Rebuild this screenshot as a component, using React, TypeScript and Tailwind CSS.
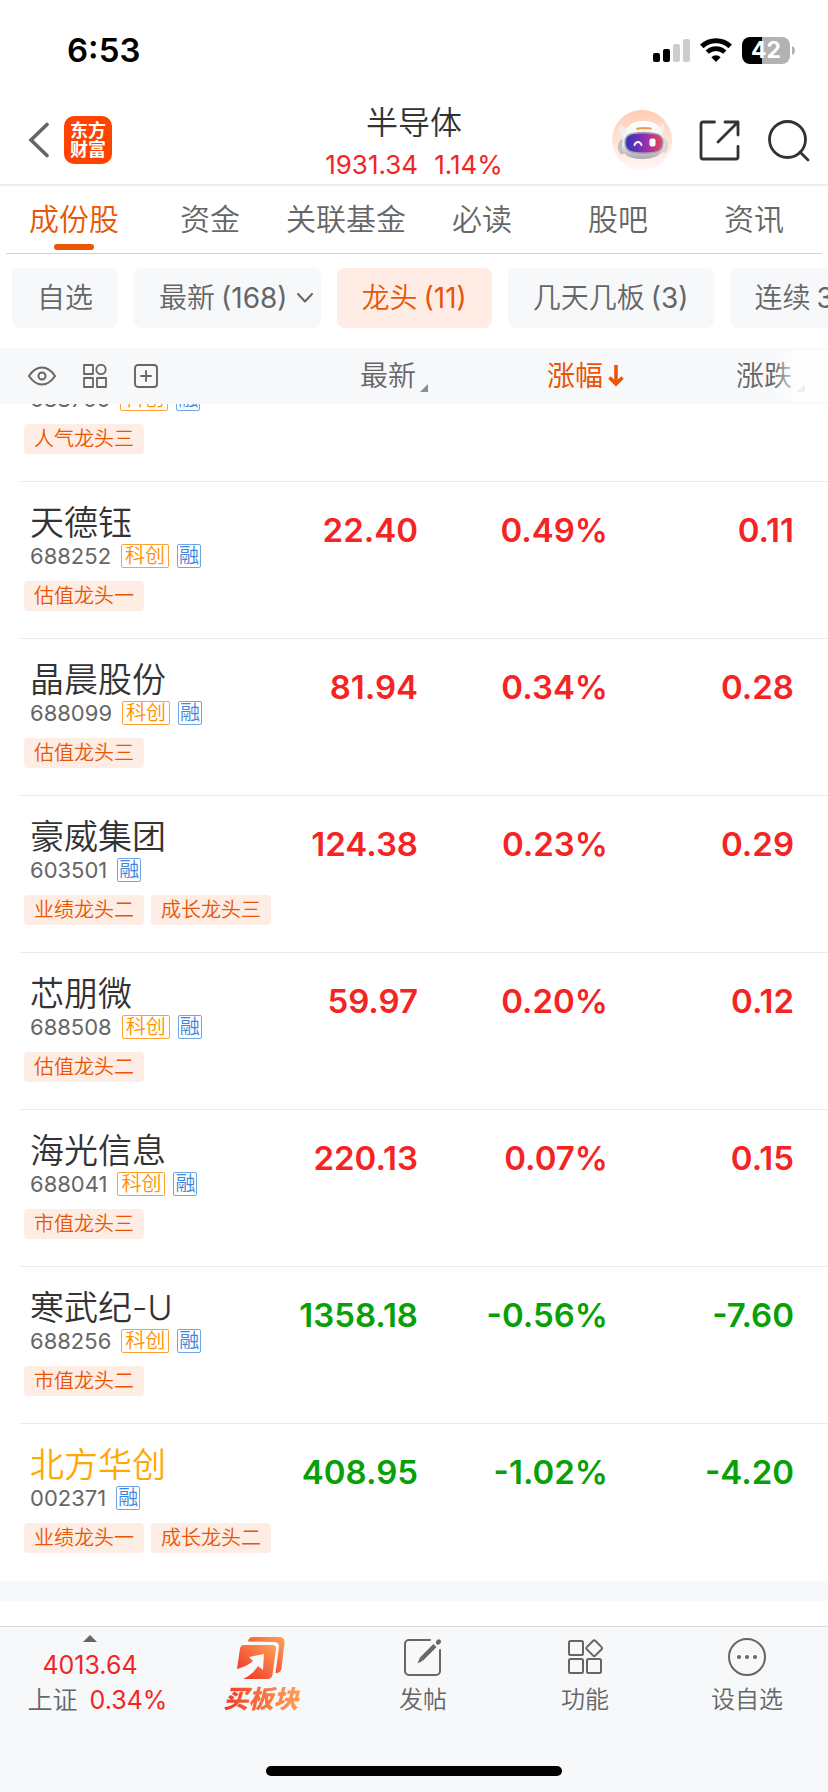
import React from "react";

type Stock = {
  name: string;
  code: string;
  star: boolean;
  tags: string[];
  price: string;
  pct: string;
  diff: string;
  held?: boolean;
};

const stocks: Stock[] = [
  { name: "天德钰", code: "688252", star: true, tags: ["估值龙头一"], price: "22.40", pct: "0.49%", diff: "0.11" },
  { name: "晶晨股份", code: "688099", star: true, tags: ["估值龙头三"], price: "81.94", pct: "0.34%", diff: "0.28" },
  { name: "豪威集团", code: "603501", star: false, tags: ["业绩龙头二", "成长龙头三"], price: "124.38", pct: "0.23%", diff: "0.29" },
  { name: "芯朋微", code: "688508", star: true, tags: ["估值龙头二"], price: "59.97", pct: "0.20%", diff: "0.12" },
  { name: "海光信息", code: "688041", star: true, tags: ["市值龙头三"], price: "220.13", pct: "0.07%", diff: "0.15" },
  { name: "寒武纪-U", code: "688256", star: true, tags: ["市值龙头二"], price: "1358.18", pct: "-0.56%", diff: "-7.60" },
  { name: "北方华创", code: "002371", star: false, tags: ["业绩龙头一", "成长龙头二"], price: "408.95", pct: "-1.02%", diff: "-4.20", held: true },
];

const tabs = ["成份股", "资金", "关联基金", "必读", "股吧", "资讯"];

function StatusBar() {
  return (
    <div className="flex h-[100px] items-center justify-between pl-[67px] pr-[33px]">
      <span className="text-[33px] font-semibold leading-[40px] text-black">6:53</span>
      <div className="flex items-center gap-[10px]">
        <svg width="37" height="23" viewBox="0 0 37 23" aria-hidden="true">
          <rect x="0" y="14" width="7" height="9" rx="2" fill="#000" />
          <rect x="10" y="10" width="7" height="13" rx="2" fill="#000" />
          <rect x="20" y="5" width="7" height="18" rx="2" fill="#ccc" />
          <rect x="30" y="0" width="7" height="23" rx="2" fill="#ccc" />
        </svg>
        <svg width="32" height="24" viewBox="0 0 32 24" fill="none" stroke="#000" aria-hidden="true">
          <path d="M1.8 8.4a20.5 20.5 0 0 1 28.4 0" strokeWidth="5" />
          <path d="M7.2 14.2a12.6 12.6 0 0 1 17.6 0" strokeWidth="4.6" />
          <path d="M16 24l-4.6-4.8a6.6 6.6 0 0 1 9.2 0z" fill="#000" stroke="none" />
        </svg>
        <div className="flex items-center gap-[2px]">
          <div className="flex h-[27px] w-12 items-center justify-center rounded-lg bg-linear-to-r from-black from-42% to-[#b2b2b2] to-42% text-[23px] font-bold leading-[27px] text-white">
            42
          </div>
          <svg width="3" height="9" viewBox="0 0 3 9" aria-hidden="true">
            <path d="M0 0c2 .8 3 2.6 3 4.500s-1 3.700-3 4.500z" fill="#b2b2b2" />
          </svg>
        </div>
      </div>
    </div>
  );
}

function Robot() {
  return (
    <svg width="60" height="60" viewBox="0 0 60 60" aria-hidden="true">
      <defs>
        <linearGradient id="halo" x1="0" y1="0" x2="0" y2="1">
          <stop offset="0" stopColor="#ffcdb5" />
          <stop offset="1" stopColor="#fff8f4" />
        </linearGradient>
        <linearGradient id="visor" x1="0" y1="0" x2="1" y2="0">
          <stop offset="0" stopColor="#2f36b0" />
          <stop offset=".5" stopColor="#8a2fb4" />
          <stop offset="1" stopColor="#f04352" />
        </linearGradient>
        <linearGradient id="shell" x1="0" y1="0" x2="0" y2="1">
          <stop offset="0" stopColor="#fff" />
          <stop offset=".6" stopColor="#eeeeef" />
          <stop offset="1" stopColor="#aaa6a9" />
        </linearGradient>
      </defs>
      <circle cx="30" cy="30" r="30" fill="url(#halo)" />
      <path d="M9 14c-3 4-2 9 2 13l9-9c-5 1-9 0-11-4zM50 12c1 4-2 5-7 5l6 8c4-4 4-9 1-13z" fill="#f3eeee" />
      <ellipse cx="10" cy="37" rx="4" ry="7.500" fill="#c5bfc1" />
      <ellipse cx="52.500" cy="36" rx="3.500" ry="7" fill="#dcd6d7" />
      <path d="M31 11c12 0 19 5 20 16 1 5 2 8 1 11-2 7-10 11-22 11S11 45 10 38c-.6-4 1-7 2-11 2-11 8-16 19-16z" fill="url(#shell)" />
      <path d="M26 17.500c4-.8 9-.8 13 0 1 .4 1 2 0 2.200-4-.5-9-.5-13 0-2.500.6-2.500-1.800 0-2.200z" fill="#f09a45" />
      <path d="M21 23.500c6-1 15-1 21 0 6 .6 9 4 9 9 0 6-3 9-9 10-6 .8-14 .8-20 0-6-.8-9-4-9-10 0-5 3-8.300 8-9z" fill="url(#visor)" stroke="#a6a0b4" strokeWidth="1.500" />
      <path d="M22.500 35c1.500-4 5.500-4 7 0" fill="none" stroke="#fff" strokeWidth="2" strokeLinecap="round" />
      <rect x="37.500" y="28.500" width="6" height="8" rx="2" fill="#fff" />
    </svg>
  );
}

function Header() {
  return (
    <header className="grid h-[86px] grid-cols-[1fr_auto_1fr] items-start border-b-2 border-[#ededed]">
      <div className="flex items-center gap-[15px] pl-7 pt-4">
        <button type="button" aria-label="返回">
          <svg width="21" height="36" viewBox="0 0 21 36" fill="none" stroke="#666" strokeWidth="3.600" strokeLinecap="round" strokeLinejoin="miter">
            <path d="M19 2.500L3 18l16 15.500" />
          </svg>
        </button>
        <div className="flex h-12 w-12 flex-col items-center justify-center rounded-[10px] bg-[#ff4400] text-lg font-bold leading-[19px] text-white">
          <span>东方</span>
          <span>财富</span>
        </div>
      </div>
      <div className="flex flex-col items-center pt-1">
        <h1 className="text-[32px] leading-[38px] text-[#333]">半导体</h1>
        <div className="flex gap-4 pt-[6px] text-[26px] font-normal leading-[34px] text-[#f52424]">
          <span>1931.34</span>
          <span>1.14%</span>
        </div>
      </div>
      <div className="flex items-center justify-end gap-[27px] pr-[18px] pt-[10px]">
        <button type="button" aria-label="智能助手"><Robot /></button>
        <button type="button" aria-label="分享">
          <svg width="41" height="41" viewBox="0 0 41 41" fill="none" stroke="#333" strokeWidth="2.800" strokeLinecap="round" strokeLinejoin="round">
            <path d="M15.500 2H4a2 2 0 0 0-2 2v33a2 2 0 0 0 2 2h33a2 2 0 0 0 2-2V26.500" />
            <path d="M26 2h13v13M39 2L19 22" />
          </svg>
        </button>
        <button type="button" aria-label="搜索">
          <svg width="43" height="43" viewBox="0 0 43 43" fill="none" stroke="#333" strokeWidth="2.800" strokeLinecap="round">
            <circle cx="20.500" cy="20.500" r="18" />
            <path d="M33 33l8 8" />
          </svg>
        </button>
      </div>
    </header>
  );
}

function Tabs() {
  return (
    <nav className="mx-[6px] flex h-[68px] border-b border-[#d3d4d6]">
      {tabs.map((t, i) => (
        <a
          key={t}
          href="#"
          className={
            i === 0
              ? "flex flex-1 flex-col items-center gap-[5px] pt-[13px] text-[30px] leading-10 text-[#ea5504]"
              : "flex flex-1 flex-col items-center pt-[13px] text-[30px] leading-10 text-[#666]"
          }
        >
          {t}
          {i === 0 && <span className="h-[6px] w-10 rounded-full bg-[#ea5504]" />}
        </a>
      ))}
    </nav>
  );
}

function Filters() {
  const pill = "flex h-[60px] shrink-0 items-center gap-[6px] whitespace-nowrap rounded-lg bg-[#f7f8fa] px-[25px]";
  return (
    <div className="flex gap-4 overflow-hidden pb-5 pl-3 pt-[14px] text-[28px] leading-9 text-[#666]">
      <button type="button" className={pill}>自选</button>
      <button type="button" className="flex h-[60px] shrink-0 items-center gap-[6px] whitespace-nowrap rounded-lg bg-[#f7f8fa] pl-[25px] pr-2">
        <span>最新</span>
        <span className="font-normal">(168)</span>
        <svg width="16" height="10" viewBox="0 0 16 10" fill="none" stroke="#666" strokeWidth="2" strokeLinecap="round" strokeLinejoin="round" className="ml-[3px]">
          <path d="M1 1l7 7.500L15 1" />
        </svg>
      </button>
      <button type="button" className="flex h-[60px] shrink-0 items-center gap-[6px] whitespace-nowrap rounded-lg bg-[#ffede5] px-[25px] text-[#ea5504]">
        <span>龙头</span>
        <span className="font-normal">(11)</span>
      </button>
      <button type="button" className={pill}><span>几天几板</span><span className="font-normal">(3)</span></button>
      <button type="button" className={pill}><span>连续</span><span className="font-normal">3日</span></button>
    </div>
  );
}

function SortMark() {
  return (
    <svg width="8" height="8" viewBox="0 0 8 8" className="mb-[2px] self-end" aria-hidden="true">
      <path d="M8 0v8H0z" fill="#8a8d93" />
    </svg>
  );
}

function Badges({ code, star }: { code: string; star: boolean }) {
  return (
    <div className="flex h-6 items-center pl-[10px]">
      <span className="text-[22px] font-normal leading-6 text-[#666]">{code}</span>
      {star && (
        <span className="ml-[10px] flex h-6 w-12 items-center justify-center rounded-[2px] border border-[#ffa033] text-[20px] leading-5 text-[#ff9000]">
          科创
        </span>
      )}
      <span className={star ? "ml-2 flex h-6 w-6 items-center justify-center rounded-[2px] border border-[#6fa5e3] text-[20px] leading-5 text-[#3d86dc]" : "ml-[10px] flex h-6 w-6 items-center justify-center rounded-[2px] border border-[#6fa5e3] text-[20px] leading-5 text-[#3d86dc]"}>
        融
      </span>
    </div>
  );
}

function LeaderTags({ tags }: { tags: string[] }) {
  return (
    <div className="flex gap-[7px] pl-1 pt-[13px]">
      {tags.map((t) => (
        <span key={t} className="flex h-[30px] w-[120px] shrink-0 items-center justify-center whitespace-nowrap rounded bg-[#fdede5] text-[20px] leading-[30px] text-[#ea5504]">
          {t}
        </span>
      ))}
    </div>
  );
}

function StockTable() {
  return (
    <table className="w-full table-fixed border-collapse">
      <thead>
        <tr className="h-14 bg-[#f7f8fa] text-[28px] leading-9 text-[#666]">
          <th scope="col" className="p-0 font-[350]">
            <div className="flex items-center gap-[27px] pl-7">
              <button type="button" aria-label="显示">
                <svg width="28" height="20" viewBox="0 0 28 20" fill="none" stroke="#666" strokeWidth="2">
                  <path d="M1 10C5 4 9.500 1.500 14 1.500S23 4 27 10c-4 6-8.500 8.500-13 8.500S5 16 1 10z" strokeLinejoin="round" />
                  <circle cx="14" cy="10" r="3.500" />
                </svg>
              </button>
              <button type="button" aria-label="布局">
                <svg width="24" height="24" viewBox="0 0 24 24" fill="none" stroke="#666" strokeWidth="1.800" strokeLinejoin="round">
                  <rect x="1" y="1" width="9" height="9" />
                  <circle cx="18" cy="5.500" r="4.700" />
                  <rect x="1" y="14" width="9" height="9" />
                  <rect x="14" y="14" width="9" height="9" />
                </svg>
              </button>
              <button type="button" aria-label="添加">
                <svg width="24" height="24" viewBox="0 0 24 24" fill="none" stroke="#666" strokeWidth="1.900" strokeLinecap="round">
                  <rect x="1" y="1" width="22" height="22" rx="3" />
                  <path d="M12 7v10M7 12h10" />
                </svg>
              </button>
            </div>
          </th>
          <th scope="col" className="w-[188px] p-0 font-[350]">
            <button type="button" className="ml-auto flex items-center gap-1">最新<SortMark /></button>
          </th>
          <th scope="col" className="w-[196px] p-0 font-normal text-[#ea5504]">
            <button type="button" className="ml-auto flex items-center gap-[5px]">
              涨幅
              <svg width="16" height="22" viewBox="0 0 16 22" fill="none" stroke="#ea5504" strokeWidth="3.600">
                <path d="M8 0v19M1.500 12.500L8 19l6.500-6.500" />
              </svg>
            </button>
          </th>
          <th scope="col" className="relative w-[204px] p-0 pr-[23px] font-[350]">
            <button type="button" className="ml-auto flex items-center gap-[5px]">涨跌<SortMark /></button>
            <span className="pointer-events-none absolute inset-y-[2px] right-0 w-14 bg-linear-to-r from-white/0 to-white/85 to-50%" />
          </th>
        </tr>
      </thead>
      <tbody>
        <tr>
          <td colSpan={4} className="p-0 pl-5">
            <div className="flex h-[78px] flex-col justify-end overflow-hidden border-b border-[#ebebeb] pb-[27px]">
              <Badges code="688766" star />
              <LeaderTags tags={["人气龙头三"]} />
            </div>
          </td>
        </tr>
        {stocks.map((s, i) => {
          const tone = s.diff.startsWith("-") ? "text-[#07a007]" : "text-[#f52424]";
          const line = i < stocks.length - 1 ? "border-b border-[#ebebeb]" : "border-b border-transparent";
          return (
            <tr key={s.code} className={"text-right align-top text-[33px] font-semibold leading-[42px] " + tone}>
              <td className="p-0 pl-5 text-left font-[350]">
                <div className={"h-[157px] pt-5 " + line}>
                  <div className={s.held ? "h-[42px] whitespace-nowrap pl-[10px] text-[34px] text-[#ffa800]" : "h-[42px] whitespace-nowrap pl-[10px] text-[34px] text-[#333]"}>{s.name}</div>
                  <Badges code={s.code} star={s.star} />
                  <LeaderTags tags={s.tags} />
                </div>
              </td>
              <td className="p-0"><div className={"h-[157px] pr-[10px] pt-[27px] " + line}>{s.price}</div></td>
              <td className="p-0"><div className={"h-[157px] pr-4 pt-[27px] " + line}>{s.pct}</div></td>
              <td className="p-0"><div className={"h-[157px] pr-[34px] pt-[27px] " + line}>{s.diff}</div></td>
            </tr>
          );
        })}
      </tbody>
    </table>
  );
}

function BottomNav() {
  const item = "flex flex-1 flex-col items-center gap-[7px] pt-[10px] text-2xl leading-8 text-[#666]";
  return (
    <footer className="mt-auto border-t border-[#dadbde] bg-[#f7f8fa]">
      <div className="flex h-[139px]">
        <a href="#" className="flex w-[180px] flex-col items-center pt-2 text-[25px] font-normal leading-[35px] text-[#f52424]">
          <svg width="14" height="7" viewBox="0 0 14 7" aria-hidden="true">
            <path d="M7 0l7 7H0z" fill="#666" />
          </svg>
          <span className="pt-[6px]">4013.64</span>
          <span className="flex gap-3 whitespace-nowrap pl-[15px]"><span className="font-[350] text-[#666]">上证</span>0.34%</span>
        </a>
        <a href="#" className="flex flex-1 flex-col items-center gap-[3px] pt-[9px]">
          <svg width="48" height="44" viewBox="0 0 48 44" aria-hidden="true">
            <defs>
              <linearGradient id="buy" x1="0" y1="1" x2="1" y2="0">
                <stop offset="0" stopColor="#ee2a24" />
                <stop offset="1" stopColor="#ffa257" />
              </linearGradient>
            </defs>
            <path d="M11 5.500C11.500 2.500 13 1 16 1h26c4 0 6 2 5.500 6l-3 25c-.4 3.500-2 5-6 5l3.500-26c.3-3-1.500-5-4.500-5z" fill="url(#buy)" />
            <path d="M7 9h28c3 0 4.500 1.500 4 4.500l-3.500 25c-.4 3-2.500 4.500-5.500 4.500H6c7-3 11-7 15-13l5 4 1-16-15 3 4 4C13 28 7 31 0 33L3 12.500C3.500 10 5 9 7 9z" fill="url(#buy)" />
          </svg>
          <span className="bg-linear-to-r from-[#ee2a24] to-[#ffa257] bg-clip-text px-1 text-[25px] font-black italic leading-8 text-transparent">买板块</span>
        </a>
        <a href="#" className={item}>
          <svg width="40" height="40" viewBox="0 0 40 40" fill="none" stroke="#666" strokeWidth="2" strokeLinecap="round">
            <path d="M27 3H6a4 4 0 0 0-4 4v27a4 4 0 0 0 4 4h27a4 4 0 0 0 4-4V13" />
            <path d="M32 8.500L18.500 22" strokeWidth="4.500" strokeLinecap="butt" />
            <path d="M16.900 20.400L14.500 26.500l5.600-2.900z" fill="#666" stroke="none" />
            <path d="M35 5.500l.8-.8" strokeWidth="4.500" />
          </svg>
          发帖
        </a>
        <a href="#" className={item}>
          <svg width="40" height="40" viewBox="0 0 40 40" fill="none" stroke="#666" strokeWidth="2" strokeLinejoin="round">
            <rect x="4" y="4" width="14" height="14" rx="1.500" />
            <rect x="4" y="22" width="14" height="14" rx="1.500" />
            <rect x="22" y="22" width="14" height="14" rx="1.500" />
            <rect x="23.200" y="5.200" width="12" height="12" rx="1.500" transform="rotate(45 29.200 11.200)" />
          </svg>
          功能
        </a>
        <a href="#" className={item}>
          <svg width="40" height="40" viewBox="0 0 40 40" fill="none" stroke="#666" strokeWidth="2">
            <circle cx="20" cy="20" r="18" />
            <g fill="#666" stroke="none">
              <circle cx="12" cy="20" r="2" />
              <circle cx="20" cy="20" r="2" />
              <circle cx="28" cy="20" r="2" />
            </g>
          </svg>
          设自选
        </a>
      </div>
      <div className="mx-auto mb-4 h-[10px] w-[296px] rounded-full bg-black" />
    </footer>
  );
}

export default function App() {
  return (
    <div className="flex min-h-screen flex-col bg-white font-['Inter','Noto_Sans_CJK_SC',sans-serif] font-[350]">
      <StatusBar />
      <Header />
      <Tabs />
      <Filters />
      <main className="pb-[25px]">
        <StockTable />
        <div className="h-5 bg-[#f7f8fa]" />
      </main>
      <BottomNav />
    </div>
  );
}
